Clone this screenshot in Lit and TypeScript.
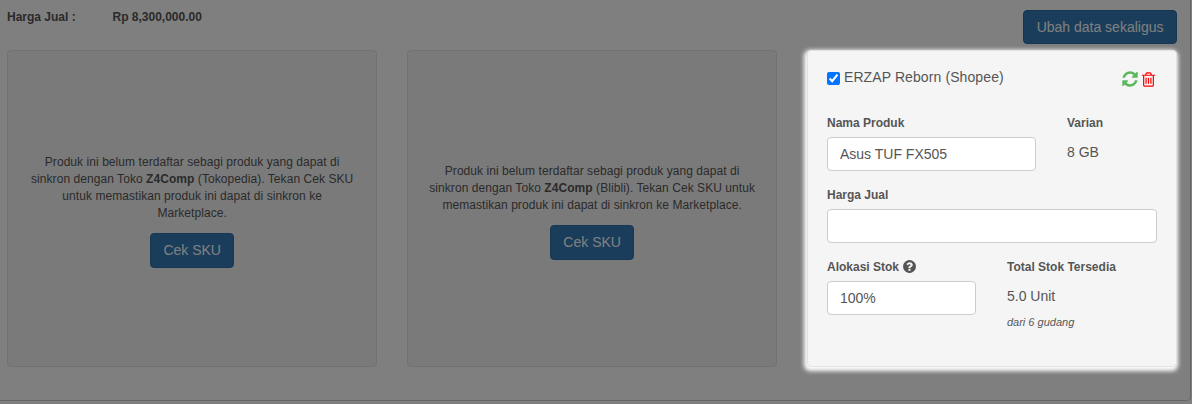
import { LitElement, html, css, svg } from "lit";
import { customElement } from "lit/decorators.js";

const REFRESH = "M1639 1056q0 5-1 7-64 268-268 434.5t-478 166.5q-146 0-282.5-55t-243.5-157l-129 129q-19 19-45 19t-45-19-19-45v-448q0-26 19-45t45-19h448q26 0 45 19t19 45-19 45l-137 137q71 66 161 102t187 36q134 0 250-65t186-179q11-17 53-117 8-23 30-23h192q13 0 22.5 9.5t9.5 22.5zm25-800v448q0 26-19 45t-45 19h-448q-26 0-45-19t-19-45 19-45l138-138q-148-137-349-137-134 0-250 65t-186 179q-11 17-53 117-8 23-30 23h-199q-13 0-22.5-9.5t-9.5-22.5v-7q65-268 270-434.5t480-166.5q146 0 284 55.5t245 156.5l130-129q19-19 45-19t45 19 19 45z";
const TRASH = "M704 736v576q0 14-9 23t-23 9h-64q-14 0-23-9t-9-23v-576q0-14 9-23t23-9h64q14 0 23 9t9 23zm256 0v576q0 14-9 23t-23 9h-64q-14 0-23-9t-9-23v-576q0-14 9-23t23-9h64q14 0 23 9t9 23zm256 0v576q0 14-9 23t-23 9h-64q-14 0-23-9t-9-23v-576q0-14 9-23t23-9h64q14 0 23 9t9 23zm128 724v-948h-896v948q0 22 7 40.5t14.5 27 10.5 8.5h832q3 0 10.5-8.5t14.5-27 7-40.5zm-672-1076h448l-48-117q-7-9-17-11h-317q-10 2-17 11zm928 32v64q0 14-9 23t-23 9h-96v948q0 83-47 143.5t-113 60.5h-832q-66 0-113-58.5t-47-141.5v-952h-96q-14 0-23-9t-9-23v-64q0-14 9-23t23-9h309l70-167q15-37 54-63t79-26h320q40 0 79 26t54 63l70 167h309q14 0 23 9t9 23z";
const QUESTION = "M1024 1376v-192q0-14-9-23t-23-9h-192q-14 0-23 9t-9 23v192q0 14 9 23t23 9h192q14 0 23-9t9-23zm256-672q0-88-55.5-163t-138.5-116-170-41q-243 0-371 213-15 24 8 42l132 100q7 6 19 6 16 0 25-12 53-68 86-92 34-24 86-24 48 0 85.5 26t37.5 59q0 38-20 61t-68 45q-63 28-115.5 86.5t-52.5 125.5v36q0 14 9 23t23 9h192q14 0 23-9t9-23q0-19 21.5-49.5t54.5-49.5q32-18 49-28.5t46-35 44.5-48 28-60.5 12.5-81zm384 192q0 209-103 385.5t-279.5 279.5-385.5 103-385.5-103-279.5-279.5-103-385.5 103-385.5 279.5-279.5 385.5-103 385.5 103 279.5 279.5 103 385.5z";

const icon = (d: string, cls: string) =>
  html`<svg class=${cls} viewBox="0 0 1792 1792" fill="currentColor">${svg`<path d=${d}></path>`}</svg>`;

@customElement("app-root")
export class AppRoot extends LitElement {
  static styles = css`
    :host {
      display: block;
      position: relative;
      width: 1192px;
      height: 404px;
      overflow: hidden;
      background: #fff;
      font-family: "Liberation Sans", Arial, sans-serif;
      font-size: 12px;
      line-height: 17px;
      color: #555;
    }
    .panel {
      box-sizing: border-box;
      height: 421px;
      margin: -20px 1px 0 -5px;
      padding: 19px 13px 0 11px;
      border: 1px solid #ccc;
      border-radius: 4px;
    }
    .head {
      display: flex;
      justify-content: space-between;
      align-items: flex-start;
      height: 50px;
    }
    .price {
      display: flex;
      padding-top: 9px;
      font-weight: 700;
      color: #555;
    }
    .price .k { width: 105.5px; }
    .btn {
      display: inline-block;
      box-sizing: border-box;
      height: 35px;
      padding: 0 12.5px;
      border: 1px solid #2e6da4;
      border-radius: 4px;
      background: #337ab7;
      color: #fff;
      font: 14px/33px "Liberation Sans", Arial, sans-serif;
    }
    .head .btn { margin-top: 10px; height: 34px; line-height: 32px; }
    .cols {
      display: grid;
      grid-template-columns: repeat(3, 370.33px);
      gap: 29.67px;
    }
    .well {
      box-sizing: border-box;
      height: 317px;
      border: 1px solid #e3e3e3;
      border-radius: 4px;
      background: #f5f5f5;
    }
    .empty {
      display: flex;
      flex-direction: column;
      align-items: center;
      justify-content: center;
      padding: 5px 21px 0;
      text-align: center;
      color: #555;
      letter-spacing: 0.06px;
    }
    .empty p { margin: 0 0 11px; }
    .empty .btn { letter-spacing: 0; }
    .card {
      position: relative;
      z-index: 2;
      padding: 19px;
      box-shadow: -1px 2px 4px 2px #fff;
    }
    .title {
      display: flex;
      justify-content: space-between;
      height: 45px;
    }
    .check {
      display: flex;
      align-items: flex-start;
      gap: 4px;
      height: 14px;
      font-size: 14px;
      line-height: 14px;
      letter-spacing: 0.1px;
      color: #555;
    }
    .check input { width: 13px; height: 13px; margin: 2px 0 0; accent-color: #0075ff; }
    .icons { display: flex; gap: 1px; color: #5cb85c; }
    .icons svg { width: 18px; height: 18px; display: block; }
    .icons .trash { color: #f00; width: 17px; height: 17px; margin-top: 1px; }
    .form { display: grid; row-gap: 16px; }
    .row { display: flex; }
    .label { display: block; font-weight: 700; height: 17px; margin-bottom: 5px; }
    .field {
      box-sizing: border-box;
      display: block;
      width: 100%;
      height: 34px;
      padding: 0 12px;
      border: 1px solid #ccc;
      border-radius: 4px;
      background: #fff;
      color: #555;
      font: 14px "Liberation Sans", Arial, sans-serif;
    }
    .c1 { width: 209px; margin-right: 31px; }
    .c2 { width: 149px; margin-right: 31px; }
    .value { font-size: 14px; line-height: 20px; margin-top: 10px; }
    .note { font-size: 11px; font-style: italic; margin-top: 9px; line-height: 15px; }
    .q { width: 15px; height: 15px; vertical-align: -3px; }
    .overlay {
      position: absolute;
      inset: 0;
      z-index: 1;
      background: rgba(0, 0, 0, 0.5);
    }
  `;

  private empty(shop: string) {
    return html`<div class="well empty">
      <p>Produk ini belum terdaftar sebagi produk yang dapat di sinkron dengan Toko <b>Z4Comp</b> (${shop}). Tekan Cek SKU untuk memastikan produk ini dapat di sinkron ke Marketplace.</p>
      <span class="btn">Cek SKU</span>
    </div>`;
  }

  render() {
    return html`
      <div class="panel">
        <div class="head">
          <div class="price"><span class="k">Harga Jual :</span><span>Rp 8,300,000.00</span></div>
          <span class="btn">Ubah data sekaligus</span>
        </div>
        <div class="cols">
          ${this.empty("Tokopedia")}
          ${this.empty("Blibli")}
          <div class="well card">
            <div class="title">
              <label class="check"><input type="checkbox" checked />ERZAP Reborn (Shopee)</label>
              <div class="icons">${icon(REFRESH, "sync")}${icon(TRASH, "trash")}</div>
            </div>
            <div class="form">
              <div class="row">
                <div class="c1"><span class="label">Nama Produk</span><input class="field" value="Asus TUF FX505" /></div>
                <div><span class="label">Varian</span><div class="value">8 GB</div></div>
              </div>
              <div><span class="label">Harga Jual</span><input class="field" /></div>
              <div class="row">
                <div class="c2"><span class="label">Alokasi Stok ${icon(QUESTION, "q")}</span><input class="field" value="100%" /></div>
                <div><span class="label">Total Stok Tersedia</span><div class="value">5.0 Unit</div><div class="note">dari 6 gudang</div></div>
              </div>
            </div>
          </div>
        </div>
      </div>
      <div class="overlay"></div>
    `;
  }
}
